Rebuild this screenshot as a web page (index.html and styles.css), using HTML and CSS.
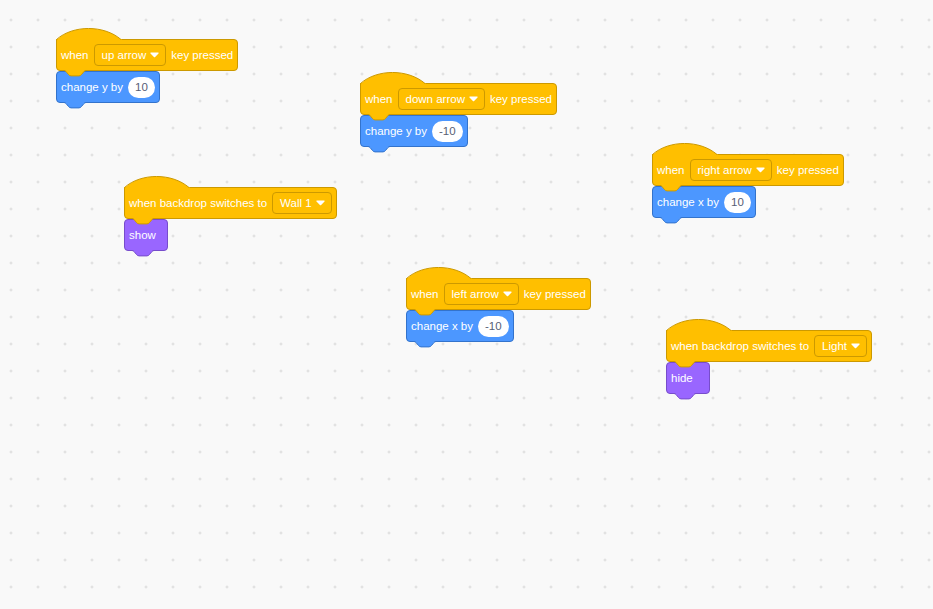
FILE: index.html
```html
<!DOCTYPE html>
<html lang="en">
<head>
    <meta charset="UTF-8">
    <title>Scratch Workspace</title>
    <link rel="stylesheet" href="styles.css">
</head>
<body>
    <div class="workspace">

        <!-- when up arrow key pressed -->
        <div class="script s1">
            <div class="block hat events">
                <svg class="cap" width="67" height="13" viewBox="0 0 67 13"><path class="cap-fill" d="M1,13 L1,11.5 C17,-3.2 48,-3.2 65,11.5 L66,11.5 L66,13 Z"/><path class="cap-line" d="M0.5,12 L0.5,11.5 C17,-3.2 48,-3.2 65,11.5"/></svg>
                <span>when</span>
                <span class="dropdown">up arrow <svg class="arrow" width="9" height="6" viewBox="0 0 9 6"><path d="M1,0.5 H8 C8.6,0.5 8.9,1.2 8.5,1.6 L5.1,5.1 C4.8,5.4 4.2,5.4 3.9,5.1 L0.5,1.6 C0.1,1.2 0.4,0.5 1,0.5 Z"/></svg></span>
                <span>key pressed</span>
                <svg class="tab" width="23" height="8" viewBox="0 0 23 8"><path class="tab-fill" d="M0,0 H22 V0.5 C21,0.5 20.5,1 20,1.5 L17.5,4.5 C17,5 16.3,5.9 15,5.9 H7 C5.7,5.9 5,5 4.5,4.5 L2,1.5 C1.5,1 1,0.5 0,0.5 Z"/><path class="tab-line" d="M0,0.5 C1,0.5 1.5,1 2,1.5 L4.5,4.5 C5,5 5.7,5.9 7,5.9 H15 C16.3,5.9 17,5 17.5,4.5 L20,1.5 C20.5,1 21,0.5 22,0.5"/></svg>
            </div>
            <div class="block motion">
                <span>change y by</span>
                <span class="number">10</span>
                <svg class="tab" width="23" height="8" viewBox="0 0 23 8"><path class="tab-fill" d="M0,0 H22 V0.5 C21,0.5 20.5,1 20,1.5 L17.5,4.5 C17,5 16.3,5.9 15,5.9 H7 C5.7,5.9 5,5 4.5,4.5 L2,1.5 C1.5,1 1,0.5 0,0.5 Z"/><path class="tab-line" d="M0,0.5 C1,0.5 1.5,1 2,1.5 L4.5,4.5 C5,5 5.7,5.9 7,5.9 H15 C16.3,5.9 17,5 17.5,4.5 L20,1.5 C20.5,1 21,0.5 22,0.5"/></svg>
            </div>
        </div>

        <!-- when down arrow key pressed -->
        <div class="script s2">
            <div class="block hat events">
                <svg class="cap" width="67" height="13" viewBox="0 0 67 13"><path class="cap-fill" d="M1,13 L1,11.5 C17,-3.2 48,-3.2 65,11.5 L66,11.5 L66,13 Z"/><path class="cap-line" d="M0.5,12 L0.5,11.5 C17,-3.2 48,-3.2 65,11.5"/></svg>
                <span>when</span>
                <span class="dropdown">down arrow <svg class="arrow" width="9" height="6" viewBox="0 0 9 6"><path d="M1,0.5 H8 C8.6,0.5 8.9,1.2 8.5,1.6 L5.1,5.1 C4.8,5.4 4.2,5.4 3.9,5.1 L0.5,1.6 C0.1,1.2 0.4,0.5 1,0.5 Z"/></svg></span>
                <span>key pressed</span>
                <svg class="tab" width="23" height="8" viewBox="0 0 23 8"><path class="tab-fill" d="M0,0 H22 V0.5 C21,0.5 20.5,1 20,1.5 L17.5,4.5 C17,5 16.3,5.9 15,5.9 H7 C5.7,5.9 5,5 4.5,4.5 L2,1.5 C1.5,1 1,0.5 0,0.5 Z"/><path class="tab-line" d="M0,0.5 C1,0.5 1.5,1 2,1.5 L4.5,4.5 C5,5 5.7,5.9 7,5.9 H15 C16.3,5.9 17,5 17.5,4.5 L20,1.5 C20.5,1 21,0.5 22,0.5"/></svg>
            </div>
            <div class="block motion">
                <span>change y by</span>
                <span class="number">-10</span>
                <svg class="tab" width="23" height="8" viewBox="0 0 23 8"><path class="tab-fill" d="M0,0 H22 V0.5 C21,0.5 20.5,1 20,1.5 L17.5,4.5 C17,5 16.3,5.9 15,5.9 H7 C5.7,5.9 5,5 4.5,4.5 L2,1.5 C1.5,1 1,0.5 0,0.5 Z"/><path class="tab-line" d="M0,0.5 C1,0.5 1.5,1 2,1.5 L4.5,4.5 C5,5 5.7,5.9 7,5.9 H15 C16.3,5.9 17,5 17.5,4.5 L20,1.5 C20.5,1 21,0.5 22,0.5"/></svg>
            </div>
        </div>

        <!-- when right arrow key pressed -->
        <div class="script s3">
            <div class="block hat events">
                <svg class="cap" width="67" height="13" viewBox="0 0 67 13"><path class="cap-fill" d="M1,13 L1,11.5 C17,-3.2 48,-3.2 65,11.5 L66,11.5 L66,13 Z"/><path class="cap-line" d="M0.5,12 L0.5,11.5 C17,-3.2 48,-3.2 65,11.5"/></svg>
                <span>when</span>
                <span class="dropdown">right arrow <svg class="arrow" width="9" height="6" viewBox="0 0 9 6"><path d="M1,0.5 H8 C8.6,0.5 8.9,1.2 8.5,1.6 L5.1,5.1 C4.8,5.4 4.2,5.4 3.9,5.1 L0.5,1.6 C0.1,1.2 0.4,0.5 1,0.5 Z"/></svg></span>
                <span>key pressed</span>
                <svg class="tab" width="23" height="8" viewBox="0 0 23 8"><path class="tab-fill" d="M0,0 H22 V0.5 C21,0.5 20.5,1 20,1.5 L17.5,4.5 C17,5 16.3,5.9 15,5.9 H7 C5.7,5.9 5,5 4.5,4.5 L2,1.5 C1.5,1 1,0.5 0,0.5 Z"/><path class="tab-line" d="M0,0.5 C1,0.5 1.5,1 2,1.5 L4.5,4.5 C5,5 5.7,5.9 7,5.9 H15 C16.3,5.9 17,5 17.5,4.5 L20,1.5 C20.5,1 21,0.5 22,0.5"/></svg>
            </div>
            <div class="block motion">
                <span>change x by</span>
                <span class="number">10</span>
                <svg class="tab" width="23" height="8" viewBox="0 0 23 8"><path class="tab-fill" d="M0,0 H22 V0.5 C21,0.5 20.5,1 20,1.5 L17.5,4.5 C17,5 16.3,5.9 15,5.9 H7 C5.7,5.9 5,5 4.5,4.5 L2,1.5 C1.5,1 1,0.5 0,0.5 Z"/><path class="tab-line" d="M0,0.5 C1,0.5 1.5,1 2,1.5 L4.5,4.5 C5,5 5.7,5.9 7,5.9 H15 C16.3,5.9 17,5 17.5,4.5 L20,1.5 C20.5,1 21,0.5 22,0.5"/></svg>
            </div>
        </div>

        <!-- when backdrop switches to Wall 1 -->
        <div class="script s4">
            <div class="block hat events">
                <svg class="cap" width="67" height="13" viewBox="0 0 67 13"><path class="cap-fill" d="M1,13 L1,11.5 C17,-3.2 48,-3.2 65,11.5 L66,11.5 L66,13 Z"/><path class="cap-line" d="M0.5,12 L0.5,11.5 C17,-3.2 48,-3.2 65,11.5"/></svg>
                <span>when backdrop switches to</span>
                <span class="dropdown">Wall 1 <svg class="arrow" width="9" height="6" viewBox="0 0 9 6"><path d="M1,0.5 H8 C8.6,0.5 8.9,1.2 8.5,1.6 L5.1,5.1 C4.8,5.4 4.2,5.4 3.9,5.1 L0.5,1.6 C0.1,1.2 0.4,0.5 1,0.5 Z"/></svg></span>
                <svg class="tab" width="23" height="8" viewBox="0 0 23 8"><path class="tab-fill" d="M0,0 H22 V0.5 C21,0.5 20.5,1 20,1.5 L17.5,4.5 C17,5 16.3,5.9 15,5.9 H7 C5.7,5.9 5,5 4.5,4.5 L2,1.5 C1.5,1 1,0.5 0,0.5 Z"/><path class="tab-line" d="M0,0.5 C1,0.5 1.5,1 2,1.5 L4.5,4.5 C5,5 5.7,5.9 7,5.9 H15 C16.3,5.9 17,5 17.5,4.5 L20,1.5 C20.5,1 21,0.5 22,0.5"/></svg>
            </div>
            <div class="block looks">
                <span>show</span>
                <svg class="tab" width="23" height="8" viewBox="0 0 23 8"><path class="tab-fill" d="M0,0 H22 V0.5 C21,0.5 20.5,1 20,1.5 L17.5,4.5 C17,5 16.3,5.9 15,5.9 H7 C5.7,5.9 5,5 4.5,4.5 L2,1.5 C1.5,1 1,0.5 0,0.5 Z"/><path class="tab-line" d="M0,0.5 C1,0.5 1.5,1 2,1.5 L4.5,4.5 C5,5 5.7,5.9 7,5.9 H15 C16.3,5.9 17,5 17.5,4.5 L20,1.5 C20.5,1 21,0.5 22,0.5"/></svg>
            </div>
        </div>

        <!-- when left arrow key pressed -->
        <div class="script s5">
            <div class="block hat events">
                <svg class="cap" width="67" height="13" viewBox="0 0 67 13"><path class="cap-fill" d="M1,13 L1,11.5 C17,-3.2 48,-3.2 65,11.5 L66,11.5 L66,13 Z"/><path class="cap-line" d="M0.5,12 L0.5,11.5 C17,-3.2 48,-3.2 65,11.5"/></svg>
                <span>when</span>
                <span class="dropdown">left arrow <svg class="arrow" width="9" height="6" viewBox="0 0 9 6"><path d="M1,0.5 H8 C8.6,0.5 8.9,1.2 8.5,1.6 L5.1,5.1 C4.8,5.4 4.2,5.4 3.9,5.1 L0.5,1.6 C0.1,1.2 0.4,0.5 1,0.5 Z"/></svg></span>
                <span>key pressed</span>
                <svg class="tab" width="23" height="8" viewBox="0 0 23 8"><path class="tab-fill" d="M0,0 H22 V0.5 C21,0.5 20.5,1 20,1.5 L17.5,4.5 C17,5 16.3,5.9 15,5.9 H7 C5.7,5.9 5,5 4.5,4.5 L2,1.5 C1.5,1 1,0.5 0,0.5 Z"/><path class="tab-line" d="M0,0.5 C1,0.5 1.5,1 2,1.5 L4.5,4.5 C5,5 5.7,5.9 7,5.9 H15 C16.3,5.9 17,5 17.5,4.5 L20,1.5 C20.5,1 21,0.5 22,0.5"/></svg>
            </div>
            <div class="block motion">
                <span>change x by</span>
                <span class="number">-10</span>
                <svg class="tab" width="23" height="8" viewBox="0 0 23 8"><path class="tab-fill" d="M0,0 H22 V0.5 C21,0.5 20.5,1 20,1.5 L17.5,4.5 C17,5 16.3,5.9 15,5.9 H7 C5.7,5.9 5,5 4.5,4.5 L2,1.5 C1.5,1 1,0.5 0,0.5 Z"/><path class="tab-line" d="M0,0.5 C1,0.5 1.5,1 2,1.5 L4.5,4.5 C5,5 5.7,5.9 7,5.9 H15 C16.3,5.9 17,5 17.5,4.5 L20,1.5 C20.5,1 21,0.5 22,0.5"/></svg>
            </div>
        </div>

        <!-- when backdrop switches to Light -->
        <div class="script s6">
            <div class="block hat events">
                <svg class="cap" width="67" height="13" viewBox="0 0 67 13"><path class="cap-fill" d="M1,13 L1,11.5 C17,-3.2 48,-3.2 65,11.5 L66,11.5 L66,13 Z"/><path class="cap-line" d="M0.5,12 L0.5,11.5 C17,-3.2 48,-3.2 65,11.5"/></svg>
                <span>when backdrop switches to</span>
                <span class="dropdown">Light <svg class="arrow" width="9" height="6" viewBox="0 0 9 6"><path d="M1,0.5 H8 C8.6,0.5 8.9,1.2 8.5,1.6 L5.1,5.1 C4.8,5.4 4.2,5.4 3.9,5.1 L0.5,1.6 C0.1,1.2 0.4,0.5 1,0.5 Z"/></svg></span>
                <svg class="tab" width="23" height="8" viewBox="0 0 23 8"><path class="tab-fill" d="M0,0 H22 V0.5 C21,0.5 20.5,1 20,1.5 L17.5,4.5 C17,5 16.3,5.9 15,5.9 H7 C5.7,5.9 5,5 4.5,4.5 L2,1.5 C1.5,1 1,0.5 0,0.5 Z"/><path class="tab-line" d="M0,0.5 C1,0.5 1.5,1 2,1.5 L4.5,4.5 C5,5 5.7,5.9 7,5.9 H15 C16.3,5.9 17,5 17.5,4.5 L20,1.5 C20.5,1 21,0.5 22,0.5"/></svg>
            </div>
            <div class="block looks">
                <span>hide</span>
                <svg class="tab" width="23" height="8" viewBox="0 0 23 8"><path class="tab-fill" d="M0,0 H22 V0.5 C21,0.5 20.5,1 20,1.5 L17.5,4.5 C17,5 16.3,5.9 15,5.9 H7 C5.7,5.9 5,5 4.5,4.5 L2,1.5 C1.5,1 1,0.5 0,0.5 Z"/><path class="tab-line" d="M0,0.5 C1,0.5 1.5,1 2,1.5 L4.5,4.5 C5,5 5.7,5.9 7,5.9 H15 C16.3,5.9 17,5 17.5,4.5 L20,1.5 C20.5,1 21,0.5 22,0.5"/></svg>
            </div>
        </div>

    </div>
</body>
</html>
```

FILE: styles.css
```css
/* Workspace */
body {
    margin: 0;
    padding: 0;
    font-family: 'Liberation Sans', Arial, sans-serif;
    background: #f9f9f9;
    overflow: hidden;
}

.workspace {
    position: relative;
    width: 933px;
    height: 609px;
    background-color: #f9f9f9;
    background-image: radial-gradient(circle, #d6d6d6 0.9px, transparent 1.4px);
    background-size: 27px 27px;
    background-position: -2.5px 6.5px;
}

/* Scripts sit on a free canvas */
.script {
    position: absolute;
    display: flex;
    flex-direction: column;
    align-items: flex-start;
}

.s1 { left: 56px; top: 39px; }
.s2 { left: 360px; top: 83px; }
.s3 { left: 652px; top: 154px; }
.s4 { left: 124px; top: 187px; }
.s5 { left: 406px; top: 278px; }
.s6 { left: 666px; top: 330px; }

/* Blocks */
.block {
    position: relative;
    display: flex;
    align-items: center;
    gap: 5px;
    box-sizing: border-box;
    height: 32px;
    min-width: 44px;
    padding: 0 4px 0 4px;
    border: 1px solid;
    border-radius: 4px;
    color: #fff;
    font-size: 11.5px;
    white-space: nowrap;
}

.hat {
    border-top-left-radius: 0;
}

.events {
    background: #ffbf00;
    border-color: #cc9900;
    fill: #ffbf00;
    stroke: #cc9900;
}

.motion {
    background: #4c97ff;
    border-color: #3373cc;
    fill: #4c97ff;
    stroke: #3373cc;
}

.looks {
    background: #9966ff;
    border-color: #774dcb;
    fill: #9966ff;
    stroke: #774dcb;
}

.cap {
    position: absolute;
    left: -1px;
    top: -12px;
}

.tab {
    position: absolute;
    left: 7px;
    top: 100%;
    z-index: 1;
}

.cap-fill, .tab-fill {
    stroke: none;
}

.cap-line, .tab-line {
    fill: none;
    stroke-width: 1;
}

/* Inputs */
.dropdown {
    display: flex;
    align-items: center;
    gap: 4px;
    box-sizing: border-box;
    height: 22px;
    padding: 0 6px 0 7px;
    border: 1px solid #cc9900;
    border-radius: 4px;
}

.arrow {
    fill: #fff;
    stroke: none;
}

.number {
    box-sizing: border-box;
    min-width: 27px;
    height: 21px;
    line-height: 21px;
    padding: 0 7px;
    border-radius: 11px;
    background: #fff;
    color: #575e75;
    text-align: center;
}
```
